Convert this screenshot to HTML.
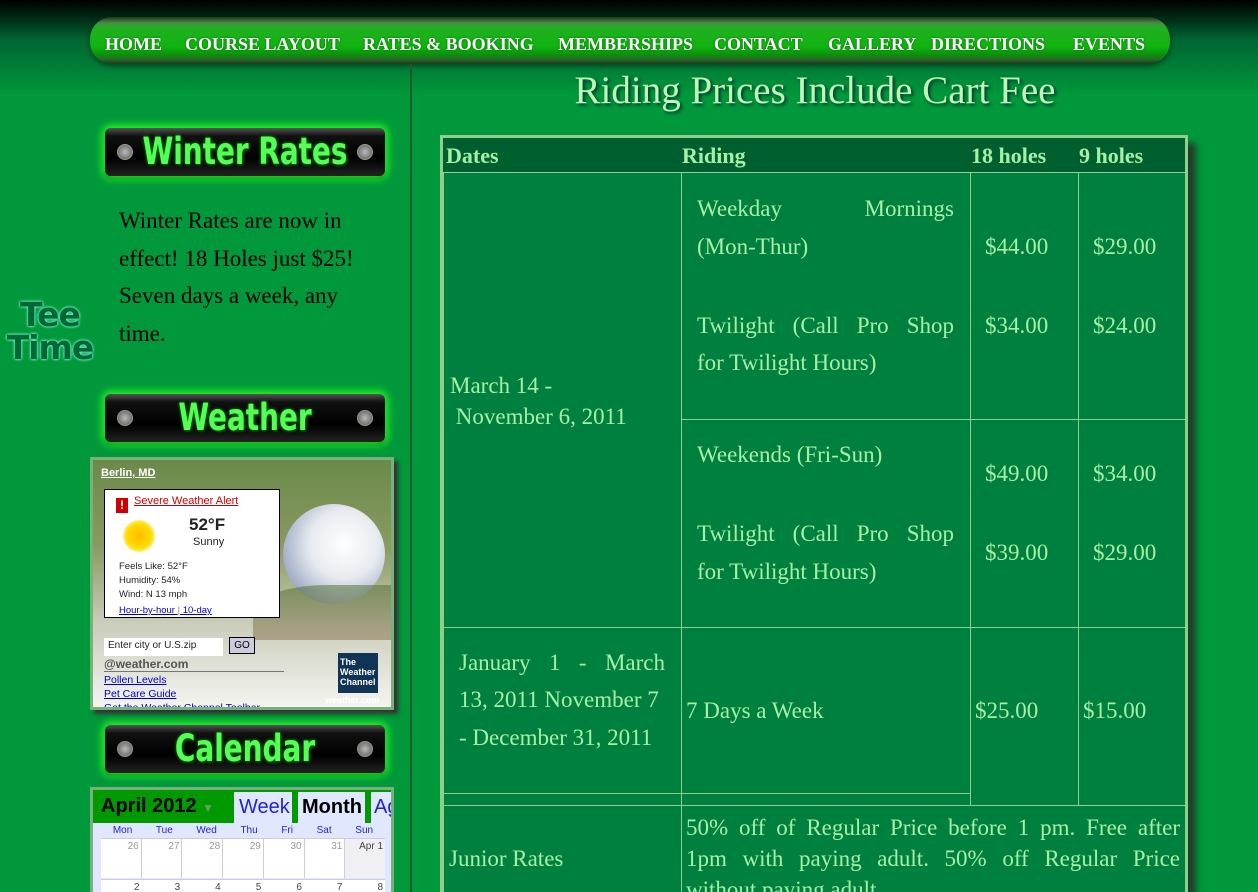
<!DOCTYPE html>
<html><head><meta charset="utf-8">
<style>
*{margin:0;padding:0;box-sizing:border-box}
html{width:1258px;height:892px;overflow:hidden}
body{width:1258px;height:892px;overflow:hidden;position:relative;background:linear-gradient(#000 0px,#021 15px,#063 40px,#00983a 95px,#00983a 892px);font-family:"Liberation Serif",serif;color:#a6f0a6}
.abs{position:absolute}
#nav{left:90px;top:17px;width:1080px;height:47px;border-radius:22px;background:linear-gradient(#1a3a1a 0,#4a8a4a 6px,#22b022 10px,#0fb30f 30px,#0a900a 38px,#2a6a2a 42px,#1c3a1c 47px);box-shadow:0 2px 6px rgba(0,0,0,.5)}
#nav span{position:absolute;top:17px;color:#fff;font-size:18px;font-weight:bold;font-variant:small-caps;text-shadow:0 0 2px #060;white-space:nowrap}
.vline{left:410px;top:64px;width:2px;height:828px;background:#1b5a2a}
.badge{left:105px;width:280px;height:48px;border-radius:6px;background:linear-gradient(#555 0,#111 8px,#000 30px,#222 48px);box-shadow:0 0 8px 3px #2f2,0 2px 3px #000;text-align:center}
.badge b{display:inline-block;font-family:"DejaVu Sans Condensed","DejaVu Sans",sans-serif;font-stretch:condensed;font-weight:bold;font-size:31px;color:#5f5;line-height:48px;transform:scaleY(1.2);text-shadow:0 0 3px #0a0,2px 2px 2px #020}
.screw{position:absolute;top:16px;width:16px;height:16px;border-radius:50%;background:radial-gradient(#bbb,#555);border:1px solid #998}
.tbl{left:440px;top:135px;width:748px;height:770px;border:3px solid #8fce8f;background:#00803f;box-shadow:8px 8px 6px rgba(40,40,40,.8)}
.c{position:absolute;border:1px solid #8fce8f}
.h{font-weight:bold;font-size:22px;top:143px;color:#a6f0a6}
.t{position:absolute;font-size:23px;line-height:37.5px;white-space:nowrap}
</style></head><body>
<div id="nav" class="abs">
<span style="left:15px">HOME</span><span style="left:95px">COURSE LAYOUT</span><span style="left:273px">RATES &amp; BOOKING</span><span style="left:468px">MEMBERSHIPS</span><span style="left:624px">CONTACT</span><span style="left:738px">GALLERY</span><span style="left:841px">DIRECTIONS</span><span style="left:983px">EVENTS</span>
</div>
<div class="abs vline"></div>
<div class="abs" style="left:440px;width:750px;top:68px;text-align:center;font-size:39px;color:#c0f8b8;text-shadow:2px 2px 3px #033">Riding Prices Include Cart Fee</div>

<div class="abs badge" style="top:128px"><div class="screw" style="left:12px"></div><b>Winter Rates</b><div class="screw" style="right:12px"></div></div>
<div class="abs" style="left:119px;top:202px;width:250px;font-size:23px;line-height:37.5px;color:#000">Winter Rates are now in effect! 18 Holes just $25! Seven days a week, any time.</div>
<div class="abs" style="left:6px;top:298px;width:88px;font-family:'DejaVu Sans',sans-serif;font-weight:bold;font-size:33px;line-height:33px;color:#063;text-align:center;text-shadow:0 0 3px #6fc,0 0 2px #aff;letter-spacing:-1px">Tee<br>Time</div>
<div class="abs badge" style="top:394px"><div class="screw" style="left:12px"></div><b>Weather</b><div class="screw" style="right:12px"></div></div>

<div class="abs" style="left:90px;top:457px;width:304px;height:253px;border:3px solid #7ab07a;background:linear-gradient(#6a8a4a,#8a9a60 35%,#c8ccb8 65%,#f4f4f0 100%);box-shadow:4px 4px 4px #333;font-family:'Liberation Sans',sans-serif;overflow:hidden">
<div class="abs" style="left:190px;top:44px;width:102px;height:100px;border-radius:50%;background:radial-gradient(circle at 60% 40%,#fff 0,#e8eaf0 40%,#8a9ab8 85%,#556 100%)"></div>
<div class="abs" style="left:160px;top:125px;width:150px;height:55px;background:linear-gradient(#4a6a2a,#8a7050);opacity:.5;border-radius:50% 0 0 0"></div>
<div class="abs" style="left:8px;top:7px;font-size:11px;font-weight:bold;color:#fff;text-decoration:underline">Berlin, MD</div>
<div class="abs" style="left:11px;top:29px;width:176px;height:129px;background:#fff;border:1px solid #000;color:#222;font-size:9.5px">
<div class="abs" style="left:11px;top:8px;width:12px;height:15px;background:#c00;color:#fff;font-weight:bold;text-align:center;font-size:12px">!</div>
<div class="abs" style="left:29px;top:5px;font-size:11px;color:#c00;text-decoration:underline">Severe Weather Alert</div>
<div class="abs" style="left:18px;top:30px;width:32px;height:32px;border-radius:50%;background:radial-gradient(#fb0,#fd0 55%,#fe8 70%,transparent 72%)"></div>
<div class="abs" style="left:84px;top:25px;font-size:17px;font-weight:bold">52°F</div>
<div class="abs" style="left:88px;top:46px;font-size:11px">Sunny</div>
<div class="abs" style="left:14px;top:70px;line-height:14px">Feels Like: 52°F<br>Humidity: 54%<br>Wind: N 13 mph</div>
<div class="abs" style="left:14px;top:115px;color:#00c;text-decoration:underline">Hour-by-hour <span style="color:#888;text-decoration:none">|</span> 10-day</div>
</div>
<div class="abs" style="left:11px;top:178px;width:119px;height:18px;background:#fff;font-size:10px;padding:2px 4px;color:#222">Enter city or U.S.zip</div>
<div class="abs" style="left:136px;top:177px;width:26px;height:17px;background:#ccd;border:1px solid #000;font-size:10px;color:#000;text-align:center;line-height:15px">GO</div>
<div class="abs" style="left:11px;top:197px;font-size:12px;font-weight:bold;color:#555;border-bottom:1px solid #777;width:180px">@weather.com</div>
<div class="abs" style="left:11px;top:213px;font-size:10.5px;color:#00c;text-decoration:underline;line-height:14px">Pollen Levels<br>Pet Care Guide<br>Get the Weather Channel Toolbar</div>
<div class="abs" style="left:245px;top:193px;width:40px;height:40px;background:#135;color:#fff;font-size:9px;font-weight:bold;line-height:10px;padding:4px 2px">The Weather Channel</div>
<div class="abs" style="left:232px;top:235px;font-size:9px;color:#fff;font-weight:bold">weather.com</div>
</div>

<div class="abs badge" style="top:725px"><div class="screw" style="left:12px"></div><b>Calendar</b><div class="screw" style="right:12px"></div></div>

<div class="abs" style="left:90px;top:787px;width:304px;height:110px;border:3px solid #7ab07a;background:#090;font-family:'Liberation Sans',sans-serif;overflow:hidden">
<div class="abs" style="left:8px;top:5px;font-size:20px;font-weight:bold;color:#000">April 2012 <span style="color:#5a5;font-size:12px">▼</span></div>
<div class="abs" style="left:141px;top:2px;width:58px;height:32px;background:#e0e8ff;color:#22c;font-size:20px;padding:4px 5px">Week</div>
<div class="abs" style="left:205px;top:2px;width:67px;height:32px;background:#e0e8ff;color:#000;font-weight:bold;font-size:20px;padding:4px 4px">Month</div>
<div class="abs" style="left:278px;top:2px;width:30px;height:32px;background:#e0e8ff;color:#22c;font-size:20px;padding:4px 3px">Ag</div>
<div class="abs" style="left:0;top:33px;width:300px;height:80px;background:#e0e8ff"></div>
<div class="abs" style="left:8px;top:35px;width:284px;font-size:10px;color:#22c;display:flex;justify-content:space-around"><span>Mon</span><span>Tue</span><span>Wed</span><span>Thu</span><span>Fri</span><span>Sat</span><span>Sun</span></div>
<div class="abs" style="left:8px;top:48px;width:284px;height:40px;background:#fff;border-top:1px solid #ccd;display:flex;font-size:10px;color:#999">
<div style="flex:1;text-align:right;padding:2px;border-right:1px solid #ccd">26</div><div style="flex:1;text-align:right;padding:2px;border-right:1px solid #ccd">27</div><div style="flex:1;text-align:right;padding:2px;border-right:1px solid #ccd">28</div><div style="flex:1;text-align:right;padding:2px;border-right:1px solid #ccd">29</div><div style="flex:1;text-align:right;padding:2px;border-right:1px solid #ccd">30</div><div style="flex:1;text-align:right;padding:2px;border-right:1px solid #ccd">31</div><div style="flex:1;text-align:right;padding:2px;color:#444;background:#f0f0f4">Apr 1</div></div>
<div class="abs" style="left:8px;top:89px;width:284px;height:20px;background:#fff;border-top:1px solid #ccd;display:flex;font-size:10px;color:#444">
<div style="flex:1;text-align:right;padding:2px">2</div><div style="flex:1;text-align:right;padding:2px">3</div><div style="flex:1;text-align:right;padding:2px">4</div><div style="flex:1;text-align:right;padding:2px">5</div><div style="flex:1;text-align:right;padding:2px">6</div><div style="flex:1;text-align:right;padding:2px">7</div><div style="flex:1;text-align:right;padding:2px">8</div></div>
</div>

<div class="abs tbl"></div>
<div class="abs" style="left:443px;top:138px;width:742px;height:34px;background:#005f2e"></div>
<div class="abs h" style="left:446px">Dates</div>
<div class="abs h" style="left:682px">Riding</div>
<div class="abs h" style="left:971px">18 holes</div>
<div class="abs h" style="left:1079px">9 holes</div>

<div class="c" style="left:443px;top:172px;width:239px;height:456px"></div>
<div class="c" style="left:681px;top:172px;width:290px;height:248px"></div>
<div class="c" style="left:970px;top:172px;width:109px;height:248px"></div>
<div class="c" style="left:1078px;top:172px;width:108px;height:248px"></div>
<div class="c" style="left:681px;top:419px;width:290px;height:209px"></div>
<div class="c" style="left:970px;top:419px;width:109px;height:209px"></div>
<div class="c" style="left:1078px;top:419px;width:108px;height:209px"></div>
<div class="c" style="left:443px;top:627px;width:239px;height:167px"></div>
<div class="c" style="left:681px;top:627px;width:290px;height:167px"></div>
<div class="c" style="left:970px;top:627px;width:109px;height:179px"></div>
<div class="c" style="left:1078px;top:627px;width:108px;height:179px"></div>
<div class="c" style="left:443px;top:793px;width:239px;height:13px"></div>
<div class="c" style="left:681px;top:793px;width:290px;height:13px"></div>
<div class="c" style="left:443px;top:805px;width:239px;height:100px"></div>
<div class="c" style="left:681px;top:805px;width:505px;height:100px"></div>

<div class="t" style="left:697px;top:190px;width:257px;text-align:justify;text-align-last:justify">Weekday Mornings</div>
<div class="t" style="left:697px;top:228px">(Mon-Thur)</div>
<div class="t" style="left:697px;top:307px;width:257px;text-align:justify;text-align-last:justify">Twilight (Call Pro Shop</div>
<div class="t" style="left:697px;top:344px">for Twilight Hours)</div>
<div class="t" style="left:697px;top:436px">Weekends (Fri-Sun)</div>
<div class="t" style="left:697px;top:515px;width:257px;text-align:justify;text-align-last:justify">Twilight (Call Pro Shop</div>
<div class="t" style="left:697px;top:553px">for Twilight Hours)</div>

<div class="t" style="left:985px;top:228px">$44.00</div>
<div class="t" style="left:1093px;top:228px">$29.00</div>
<div class="t" style="left:985px;top:307px">$34.00</div>
<div class="t" style="left:1093px;top:307px">$24.00</div>
<div class="t" style="left:985px;top:455px">$49.00</div>
<div class="t" style="left:1093px;top:455px">$34.00</div>
<div class="t" style="left:985px;top:534px">$39.00</div>
<div class="t" style="left:1093px;top:534px">$29.00</div>

<div class="t" style="left:450px;top:370px;line-height:31px">March 14 -<br>&nbsp;November 6, 2011</div>

<div class="t" style="left:459px;top:644px;width:206px;text-align:justify;text-align-last:justify">January 1 - March</div>
<div class="t" style="left:459px;top:681px">13, 2011 November 7</div>
<div class="t" style="left:459px;top:719px">- December 31, 2011</div>
<div class="t" style="left:686px;top:692px">7 Days a Week</div>
<div class="t" style="left:975px;top:692px">$25.00</div>
<div class="t" style="left:1083px;top:692px">$15.00</div>

<div class="t" style="left:449px;top:840px">Junior Rates</div>
<div class="t" style="left:686px;top:812px;width:494px;line-height:31px;text-align:justify;white-space:normal">50% off of Regular Price before 1 pm. Free after 1pm with paying adult. 50% off Regular Price without paying adult.</div>
</body></html>
